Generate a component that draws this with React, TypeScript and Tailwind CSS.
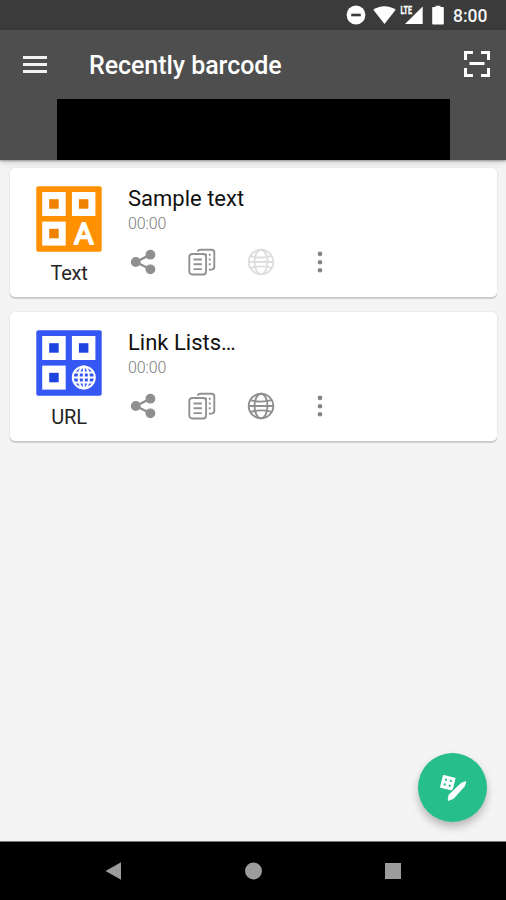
import React from 'react';

function StatusBar() {
  return (
    <div className="flex h-[30px] items-center justify-end bg-[#3b3b3b] pr-[18px]">
      <svg className="mr-[7px] h-[20px] w-[20px]" viewBox="0 0 20 20">
        <circle cx="10" cy="10" r="9.4" fill="#fff" />
        <rect x="5.2" y="8.7" width="9.6" height="2.6" fill="#3b3b3b" />
      </svg>
      <svg className="mr-[4px] h-[20px] w-[23px]" viewBox="0 0 23 20">
        <path d="M.3 4.8C6.5 0 16.5 0 22.7 4.8L11.5 19z" fill="#fff" />
      </svg>
      <svg className="mr-[9px] h-[20px] w-[23px]" viewBox="0 0 23 20">
        <path d="M22.7 1.5V19H5z" fill="#fff" />
        <rect x="0" y="0" width="12.3" height="10" fill="#3b3b3b" />
        <text x="0.5" y="9.3" fill="#fff" stroke="#fff" strokeWidth="0.3" fontSize="10.5" fontWeight="700" fontFamily="Roboto, sans-serif" textLength="11.5" lengthAdjust="spacingAndGlyphs">LTE</text>
      </svg>
      <svg className="mr-[9px] h-[20px] w-[12px]" viewBox="0 0 12 20">
        <path d="M3.5 2V.7h5V2H11a.8.8 0 0 1 .8.8v15.900a.8.8 0 0 1-.8.8H1a.8.8 0 0 1-.8-.8V2.800A.8.8 0 0 1 1 2z" fill="#fff" />
      </svg>
      <span className="w-[35px] whitespace-nowrap pt-[2px] text-[17.500px] leading-[30px] font-medium text-[#f4f4f4]">8:00</span>
    </div>
  );
}

function Header() {
  return (
    <header className="relative z-10 flex h-[130px] flex-col bg-[#4e4e4e] shadow-[0_1px_2px_rgba(0,0,0,0.35),0_3px_6px_rgba(0,0,0,0.12)]">
      <div className="flex h-[69px] items-center pr-[16px] pl-[23px]">
        <button className="flex w-[24px] flex-col gap-[4px]" aria-label="Menu">
          <span className="h-[3px] bg-[#f2f2f2]" />
          <span className="h-[3px] bg-[#f2f2f2]" />
          <span className="h-[3px] bg-[#f2f2f2]" />
        </button>
        <h1 className="ml-[42px] pt-[3px] text-[25px] font-medium tracking-[-0.05px] text-white">Recently barcode</h1>
        <svg className="relative -top-px ml-auto h-[26px] w-[26px]" viewBox="0 0 26 26" fill="none" stroke="#fff" strokeWidth="3">
          <path d="M1.500 9V1.500H9M17 1.500h7.500V9M24.500 17v7.500H17M9 24.500H1.500V17M5.500 12.500h15" />
        </svg>
      </div>
      <div className="mx-auto h-[61px] w-[393px] bg-black" />
    </header>
  );
}

function Finder({ x, y, color }: { x: number; y: number; color: string }) {
  return (
    <>
      <rect x={x} y={y} width="23.500" height="24" fill="#fff" />
      <rect x={x + 7} y={y + 7.2} width="9.500" height="9.500" fill={color} />
    </>
  );
}

function Tile({ kind }: { kind: 'text' | 'url' }) {
  const bg = kind === 'text' ? '#ff9100' : '#3557f3';
  const dot = kind === 'text' ? '#ef8100' : '#1e44e0';
  return (
    <svg className="h-[66px] w-[66px]" viewBox="0 0 66 66">
      <rect x="0.300" y="0.300" width="65.400" height="65.400" rx="2" fill={bg} />
      <Finder x={6.200} y={6} color={dot} />
      <Finder x={35.900} y={6} color={dot} />
      <Finder x={6.200} y={35.600} color={dot} />
      {kind === 'text' ? (
        <text x="47.700" y="58.300" textAnchor="middle" fill="#fff" stroke="#fff" strokeWidth="1.900" strokeLinejoin="round" fontSize="30" fontWeight="400" fontFamily="Roboto, sans-serif">A</text>
      ) : (
        <g fill="none" stroke="#fff" strokeWidth="2">
          <circle cx="47.800" cy="47.500" r="11" />
          <ellipse cx="47.800" cy="47.500" rx="5.200" ry="11" />
          <path d="M47.800 36.500v22M37 47.500h22M38.500 42.600h18.600M38.500 52.400h18.600" />
        </g>
      )}
    </svg>
  );
}

function ShareIcon() {
  return (
    <svg className="h-[30px] w-[30px]" viewBox="0 0 30 30" fill="#8f8f8f">
      <path d="M22.300 7.700L7.800 15l14.500 7.300" fill="none" stroke="#8f8f8f" strokeWidth="2.400" />
      <circle cx="7.800" cy="15" r="4.900" />
      <circle cx="22.400" cy="7.700" r="4.900" />
      <circle cx="22.400" cy="22.300" r="4.900" />
    </svg>
  );
}

function CopyIcon() {
  return (
    <svg className="h-[30px] w-[30px]" viewBox="0 0 30 30" fill="none" stroke="#929292" strokeWidth="1.900">
      <path d="M10.800 4.600c.2-1.200 1.100-1.900 2.400-1.900h11.300c1.800 0 2.800 1 2.800 2.800v14.300c0 1.800-1 2.800-2.800 2.800h-2.700" />
      <rect x="2.300" y="7" width="16.800" height="20.500" rx="3" />
      <path d="M6.500 12.500h8.400M6.500 17.300h8.400M6.500 22.100h8.400" />
      <path d="M18 7.700h2M21.800 7.700h1.900M21.800 12.500h1.900M21.800 17.300h1.900" />
    </svg>
  );
}

function GlobeIcon({ color }: { color: string }) {
  return (
    <svg className="h-[30px] w-[30px]" viewBox="0 0 30 30" fill="none" stroke={color} strokeWidth="1.900">
      <circle cx="15" cy="15" r="12.300" />
      <ellipse cx="15" cy="15" rx="6.500" ry="12.300" />
      <path d="M2.700 15h24.600M4.700 9.200c3.200 1 6.600 1.400 10.300 1.400s7.100-.4 10.300-1.400M4.700 20.800c3.200-1 6.600-1.400 10.300-1.400s7.100.4 10.300 1.400" />
    </svg>
  );
}

function MoreIcon() {
  return (
    <svg className="h-[30px] w-[30px]" viewBox="0 0 30 30" fill="#858585">
      <circle cx="15" cy="6.900" r="2.300" />
      <circle cx="15" cy="15.200" r="2.300" />
      <circle cx="15" cy="23.300" r="2.300" />
    </svg>
  );
}

function Card({ kind, label, title, globe }: { kind: 'text' | 'url'; label: string; title: string; globe: string }) {
  return (
    <article className="flex h-[129px] rounded-[5px] bg-white pl-[26px] shadow-[0_2px_1px_rgba(0,0,0,0.15),0_0_2px_rgba(0,0,0,0.13)]">
      <div className="flex w-[66px] flex-col items-center pt-[18px]">
        <Tile kind={kind} />
        <span className="mt-[9px] text-[20px] leading-[24px] tracking-[-0.2px] text-[#252525]">{label}</span>
      </div>
      <div className="ml-[26px] flex flex-col pt-[17px]">
        <h2 className="text-[22px] leading-[28px] text-[#111]">{title}</h2>
        <span className="mt-[1px] text-[16px] leading-[20px] font-light tracking-[-0.150px] text-[#7c7c7c]">00:00</span>
        <div className="mt-[13px] flex gap-[29px]">
          <ShareIcon />
          <CopyIcon />
          <GlobeIcon color={globe} />
          <MoreIcon />
        </div>
      </div>
    </article>
  );
}

function CreateButton() {
  return (
    <button className="mt-auto mr-[10px] mb-[19px] flex h-[69px] w-[69px] items-center justify-center self-end rounded-full bg-[#26bf8c] shadow-[0_5px_9px_rgba(0,0,0,0.25)]" aria-label="Create barcode">
      <svg className="h-[30px] w-[30px]" viewBox="0 0 30 30">
        <g transform="rotate(14 9.800 9.700)">
          <rect x="3.300" y="3.200" width="13" height="13" rx="0.800" fill="#fff" />
          <path d="M6.300 6.200h2v2h-2zM11.300 6.200h2v2h-2zM6.300 11.200h2v2h-2zM11.300 11.200h2v2h-2z" fill="#26bf8c" />
        </g>
        <path d="M10.100 27.500l.9-5.700L23.300 10.200l4.600-1.700-1.500 4.700L15.500 25.500z" fill="#fff" stroke="#26bf8c" strokeWidth="3" strokeLinejoin="round" />
        <path d="M10.100 27.500l.9-5.700L23.300 10.200l4.600-1.700-1.500 4.700L15.500 25.500z" fill="#fff" stroke="#fff" strokeWidth="0.800" strokeLinejoin="round" />
      </svg>
    </button>
  );
}

export default function App() {
  return (
    <div className="flex h-[900px] w-[506px] flex-col overflow-hidden bg-[#f4f4f4] font-['Roboto','Noto_Sans',sans-serif]">
      <StatusBar />
      <Header />
      <main className="flex flex-1 flex-col gap-[15px] pt-[8px] pr-[9px] pl-[10px]">
        <Card kind="text" label="Text" title="Sample text" globe="#dedede" />
        <Card kind="url" label="URL" title="Link Lists…" globe="#8f8f8f" />
        <CreateButton />
      </main>
      <nav className="flex h-[59px] items-center justify-between border-t border-[#777] bg-black px-[105px]">
        <svg className="h-[18px] w-[17px]" viewBox="0 0 17 18"><path d="M.5 9L16 .3v17.400z" fill="#9c9c9c" /></svg>
        <svg className="h-[18px] w-[18px]" viewBox="0 0 18 18"><circle cx="8.500" cy="9" r="8.500" fill="#9c9c9c" /></svg>
        <span className="h-[16px] w-[16px] bg-[#9c9c9c]" />
      </nav>
    </div>
  );
}
